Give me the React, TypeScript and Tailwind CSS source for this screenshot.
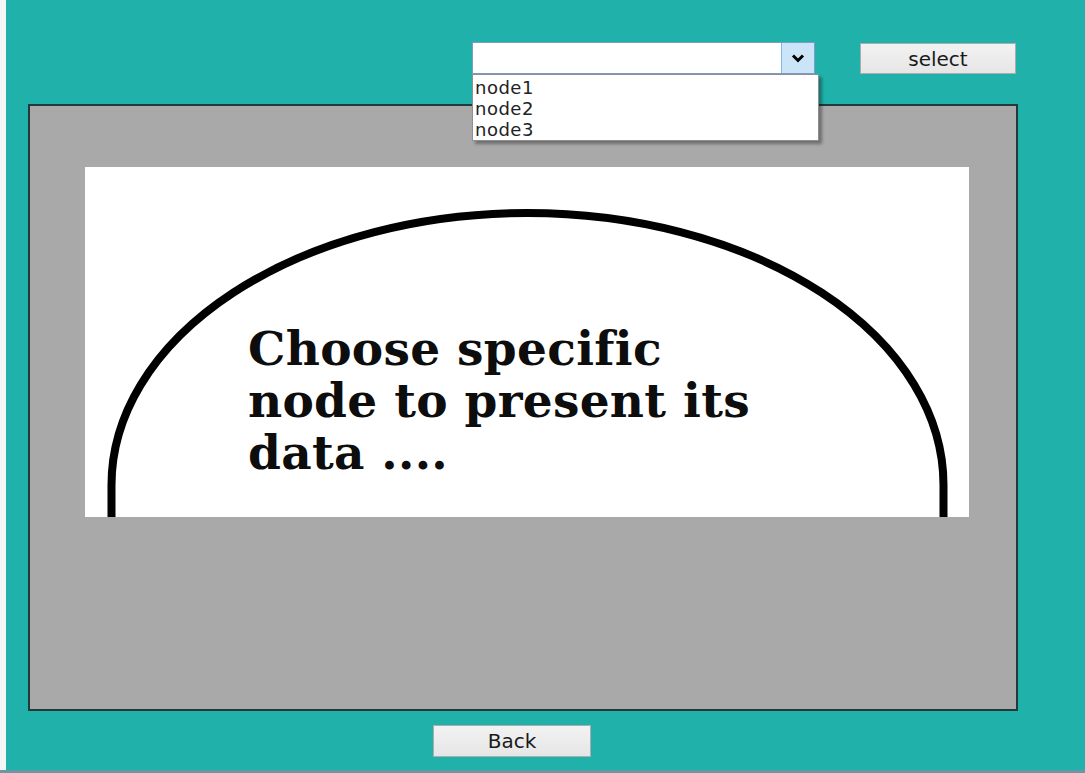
import React, { useState } from 'react';

const NODES = ['node1', 'node2', 'node3'];

const sans = { fontFamily: '"DejaVu Sans", "Liberation Sans", sans-serif' };

// Flat WinForms-style push button
const FormButton: React.FC<{ label: string; className?: string }> = ({ label, className = '' }) => (
  <button
    className={`flex items-center justify-center border border-[#acacac] bg-gradient-to-b from-[#f2f2f2] to-[#e6e6e6] text-[20px] text-[#1a1a1a] leading-none ${className}`}
    style={sans}
  >
    {label}
  </button>
);

// Picture placed in the panel: open arch with the hint text inside
const NodeHint: React.FC = () => (
  <div className="relative w-[884px] h-[350px] bg-white ml-[55px] mt-[61px]">
    <svg className="absolute inset-0" width="884" height="350" viewBox="0 0 884 350">
      <path
        d="M 26.5 352 L 26.5 318 A 416 272 0 0 1 858.5 318 L 858.5 352"
        fill="none"
        stroke="#000"
        strokeWidth="8"
      />
    </svg>
    <p
      className="relative pl-[163px] pt-[156px] text-[47px] leading-[52px] font-bold text-[#0d0d0d] tracking-[0.3px]"
      style={{ fontFamily: '"DejaVu Serif", "Liberation Serif", serif' }}
    >
      Choose specific
      <br />
      node to present its
      <br />
      data ....
    </p>
  </div>
);

export default function App() {
  const [open] = useState(true);

  return (
    <div className="w-[1085px] h-[773px] flex flex-col overflow-hidden">
      <div className="flex flex-1">
        <div className="w-[6px] bg-[#f4f6f6]" />
        <div className="flex-1 bg-[#20b2aa] flex flex-col">
          {/* node picker row */}
          <div className="flex pt-[42px] pl-[466px]">
            <div className="relative w-[343px] h-[32px] flex border border-[#7a9cc6] bg-white">
              <div className="flex-1" />
              <div className="w-[33px] flex items-center justify-center bg-[#cce4f7] border-l border-[#86b6e0]">
                <svg width="14" height="10" viewBox="0 0 14 10">
                  <path d="M 2 2.5 L 7 7.5 L 12 2.5" fill="none" stroke="#000" strokeWidth="3" />
                </svg>
              </div>
              {open && (
                <ul
                  className="absolute left-[-1px] top-[31px] w-[347px] h-[67px] bg-white border border-[#8f8f8f] shadow-[3px_3px_3px_rgba(0,0,0,0.35)] z-10 pl-[2px] pt-[2px] text-[18px] leading-[21px] tracking-[0.5px] text-[#222]"
                  style={sans}
                >
                  {NODES.map((n) => (
                    <li key={n} className="h-[21px]">
                      {n}
                    </li>
                  ))}
                </ul>
              )}
            </div>
            <FormButton label="select" className="ml-[45px] mt-[1px] w-[156px] h-[31px]" />
          </div>

          {/* display panel */}
          <div className="ml-[22px] mt-[30px] w-[990px] h-[607px] bg-[#a9a9a9] border-2 border-[#243a3a]">
            <NodeHint />
          </div>

          <FormButton label="Back" className="ml-[427px] mt-[14px] w-[158px] h-[32px]" />
        </div>
      </div>
      <div className="h-[3px] bg-[#6f94a4]" />
    </div>
  );
}
